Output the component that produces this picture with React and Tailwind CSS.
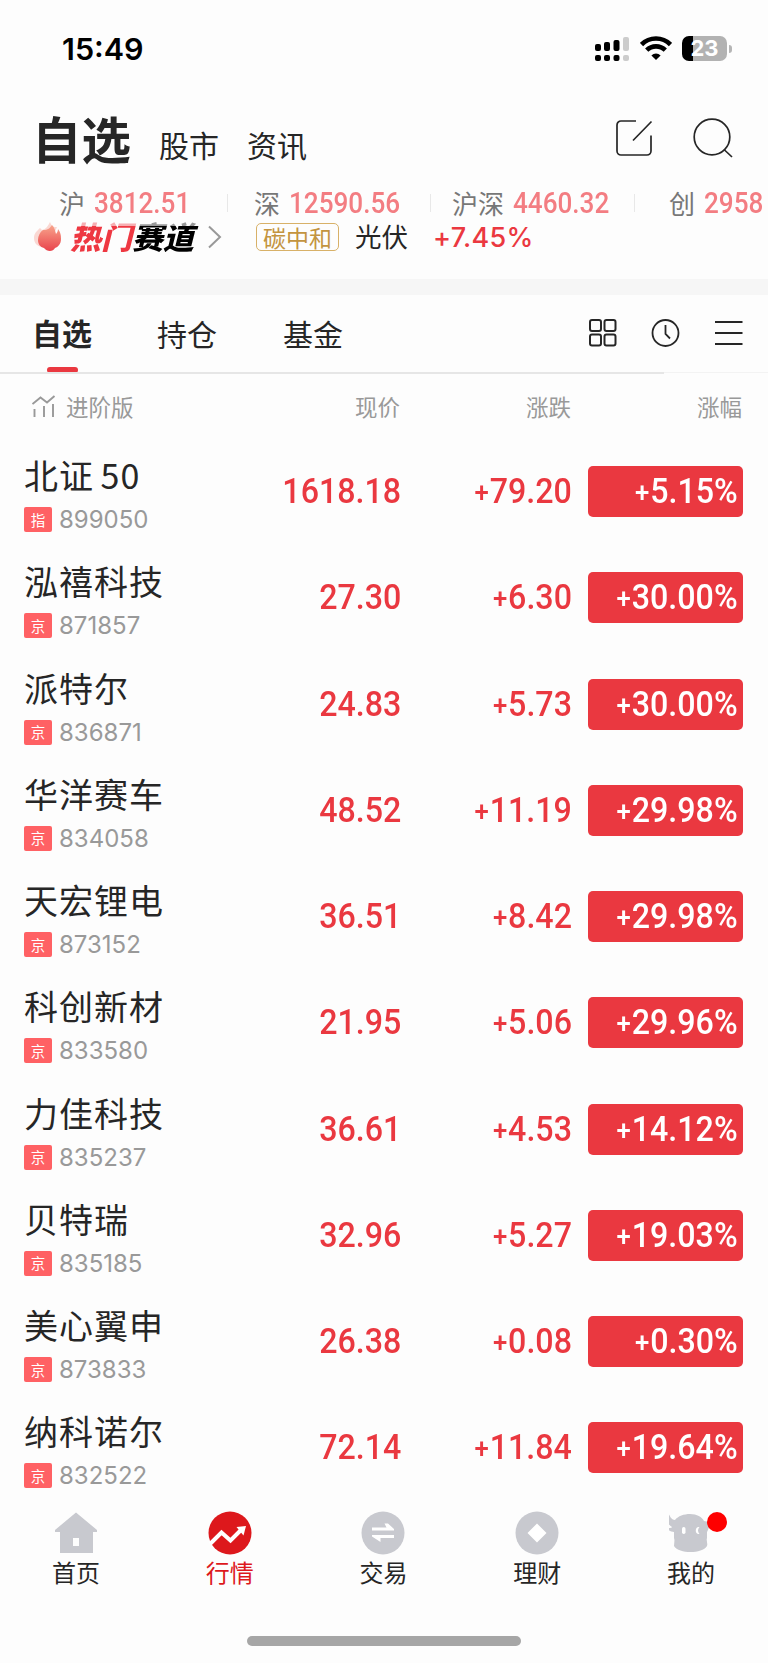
const rows = [
  { name: '北证 50', tag: '指', code: '899050', price: '1618.18', change: '79.20', percent: '5.15' },
  { name: '泓禧科技', tag: '京', code: '871857', price: '27.30', change: '6.30', percent: '30.00' },
  { name: '派特尔', tag: '京', code: '836871', price: '24.83', change: '5.73', percent: '30.00' },
  { name: '华洋赛车', tag: '京', code: '834058', price: '48.52', change: '11.19', percent: '29.98' },
  { name: '天宏锂电', tag: '京', code: '873152', price: '36.51', change: '8.42', percent: '29.98' },
  { name: '科创新材', tag: '京', code: '833580', price: '21.95', change: '5.06', percent: '29.96' },
  { name: '力佳科技', tag: '京', code: '835237', price: '36.61', change: '4.53', percent: '14.12' },
  { name: '贝特瑞', tag: '京', code: '835185', price: '32.96', change: '5.27', percent: '19.03' },
  { name: '美心翼申', tag: '京', code: '873833', price: '26.38', change: '0.08', percent: '0.30' },
  { name: '纳科诺尔', tag: '京', code: '832522', price: '72.14', change: '11.84', percent: '19.64' },
];

function StatusBar() {
  return (
    <div className="flex h-[98px] shrink-0 justify-between pl-[62px] pr-[36px]">
      <span className="mt-[31px] font-['Inter'] text-[30.500px] leading-9 font-semibold text-black">15:49</span>
      <div className="mt-[36px] flex h-[26px] items-start">
        <svg width="35" height="26" viewBox="0 0 35 26">
          <rect x="0" y="8" width="6" height="7" rx="2" />
          <rect x="9" y="6" width="6" height="9" rx="2" />
          <rect x="18.500" y="4" width="6" height="11" rx="2" />
          <rect x="28" y="1" width="6" height="14" rx="2" fill="#ccc" />
          <rect x="0" y="19" width="6" height="6" rx="2" />
          <rect x="9" y="19" width="6" height="6" rx="2" />
          <rect x="18.500" y="19" width="6" height="6" rx="2" />
          <rect x="28" y="19" width="6" height="6" rx="2" fill="#ccc" />
        </svg>
        <svg className="ml-[10px]" width="32" height="26" viewBox="0 0 32 26" fill="none" stroke="#000" strokeWidth="4.600">
          <path d="M1.500 8.500a20.500 20.500 0 0 1 29 0" />
          <path d="M6.700 14.200a13.200 13.200 0 0 1 18.600 0" />
          <path d="M16 24l-4.600-4.600a6.600 6.600 0 0 1 9.200 0z" fill="#000" stroke="none" />
        </svg>
        <div className="ml-[10px] flex h-[25px] w-[45px] items-center justify-center rounded-[7px] bg-[linear-gradient(90deg,#000_11px,#b2b2b2_11px)] font-['Inter'] text-[22px] font-bold text-white">
          23
        </div>
        <div className="mt-[9px] ml-[2px] h-[8px] w-[3px] rounded-r-full bg-[#b5b5b5]" />
      </div>
    </div>
  );
}

function Header() {
  return (
    <div className="flex h-[86px] shrink-0 items-start pr-[35px] pl-[32px] text-[#262626]">
      <h1 className="mt-[5px] text-[49.500px] leading-[70px] font-bold">自选</h1>
      <span className="mt-[25px] ml-[28px] text-[30px] leading-[42px]">股市</span>
      <span className="mt-[25px] ml-[28px] text-[30px] leading-[42px]">资讯</span>
      <svg className="mt-[20px] ml-auto" width="40" height="40" viewBox="0 0 40 40" fill="none" stroke="#262626" strokeWidth="1.700">
        <path d="M22 3H7a4 4 0 0 0-4 4v26a4 4 0 0 0 4 4h26a4 4 0 0 0 4-4V17.500M37.500 3.500L19 22.500" />
      </svg>
      <svg className="mt-[20px] ml-[39px]" width="40" height="42" viewBox="0 0 40 42" fill="none" stroke="#262626" strokeWidth="1.700">
        <circle cx="19" cy="19" r="17.800" />
        <path d="M31 31.500l8 7.500" />
      </svg>
    </div>
  );
}

function Ticker({ label, value }) {
  return (
    <span className="flex shrink-0 items-center leading-[28px]">
      <span className="text-[26px] text-[#777]">{label}</span>
      <span className="ml-[9px] inline-block origin-left scale-x-90 font-['Roboto'] text-[29px] font-medium text-[#f37d82]">{value}</span>
    </span>
  );
}

function Separator() {
  return <div className="h-[18px] w-px shrink-0 bg-[#e8e8e8]" />;
}

function Market() {
  return (
    <div className="h-[95px] shrink-0">
      <div className="flex h-[38px] items-center pl-[59px] whitespace-nowrap">
        <div className="w-[168px] shrink-0"><Ticker label="沪" value="3812.51" /></div>
        <Separator />
        <div className="ml-[26px] w-[176px] shrink-0"><Ticker label="深" value="12590.56" /></div>
        <Separator />
        <div className="ml-[21px] w-[182px] shrink-0"><Ticker label="沪深" value="4460.32" /></div>
        <Separator />
        <div className="ml-[34px]"><Ticker label="创" value="2958" /></div>
      </div>
      <div className="-mt-[2px] flex h-[32px] items-center pl-[34px]">
        <Flame />
        <span className="ml-[8px] [mask-image:linear-gradient(#0006_6px,#000_6px)] pr-[6px] text-[31px] leading-[32px] font-black text-black italic">
          <span className="text-[#ee3842]">热门</span>赛道
        </span>
        <svg className="mt-[2px] ml-[8px]" width="14" height="24" viewBox="0 0 14 24" fill="none" stroke="#999" strokeWidth="2">
          <path d="M1 1.500L12 12 1 22.500" />
        </svg>
        <span className="mt-[2px] ml-[34px] flex h-[28px] w-[83px] items-center justify-center rounded-[5px] border border-[#d8b168] text-[23px] leading-[24px] text-[#c39440]">碳中和</span>
        <span className="ml-[16px] text-[26.500px] leading-[32px] text-[#262626]">光伏</span>
        <span className="mt-[3px] ml-[25px] font-['Inter'] text-[27px] leading-[30px] font-medium tracking-[0.300px] text-[#eb3840]">+7.45%</span>
      </div>
    </div>
  );
}

function Flame() {
  return (
    <svg className="mt-[2px]" width="28" height="30" viewBox="0 0 28 30">
      <defs>
        <linearGradient id="flame" x1="0" y1="0" x2="0" y2="1">
          <stop offset="0" stopColor="#f8a58c" />
          <stop offset="1" stopColor="#e9434c" />
        </linearGradient>
      </defs>
      <path d="M8 25C2 24 0 20 0 16c0-5 3-7 6-10l2 2c4-1 6-4 8-8 2 5 4 5 7 5l-8 18z" fill="#fad8d3" />
      <path d="M9 8c5 0 7-2 9-5 3 3 3 6 4 9 1-1 2-3 2-5 3 4 3 7 3 10 0 5-3 8-6 9-2 4-8 4-11 0-4-1-6-4-6-8 0-4 2-8 5-10z" fill="url(#flame)" />
    </svg>
  );
}

function Tabs() {
  return (
    <div className="flex h-[77px] shrink-0 items-start pr-[25px] pl-[32px] text-[30px] leading-[42px] text-[#262626]">
      <div className="mt-[16px] w-[125px] font-bold">
        自选
        <div className="mt-[14px] ml-[15px] h-[6px] w-[31px] rounded-full bg-[#ea3840]" />
      </div>
      <span className="mt-[17px] w-[126px]">持仓</span>
      <span className="mt-[17px]">基金</span>
      <div className="mt-[23px] ml-auto flex gap-[34px]">
        <svg width="29" height="30" viewBox="0 0 29 30" fill="none" stroke="#262626" strokeWidth="2">
          <rect x="2" y="2" width="11" height="11" rx="2" />
          <rect x="16.500" y="2" width="11" height="11" rx="2" />
          <rect x="2" y="16.500" width="11" height="11" rx="2" />
          <rect x="16.500" y="16.500" width="11" height="11" rx="2" />
        </svg>
        <svg width="29" height="30" viewBox="0 0 29 30" fill="none" stroke="#262626" strokeWidth="1.800">
          <circle cx="14.500" cy="15" r="13" />
          <path d="M14.500 7v9l4.500 4.500" />
        </svg>
        <svg width="29" height="30" viewBox="0 0 29 30" fill="none" stroke="#262626" strokeWidth="1.800">
          <path d="M1 4h27.500M1 15h27.500M1 26h27.500" />
        </svg>
      </div>
    </div>
  );
}

function ColumnHeader() {
  return (
    <div className="flex h-[78px] shrink-0 items-start pt-[16px] pr-[26px] pl-[32px] text-[22.500px] leading-[32px] text-[#999]">
      <svg className="mt-[5px]" width="24" height="24" viewBox="0 0 24 24" fill="none" stroke="#999" strokeWidth="1.900">
        <path d="M.5 9L8.500 2.500l6.500 5L22.500 1M2.500 14v8M12 11v11M21 9v13" />
      </svg>
      <span className="ml-[10px]">进阶版</span>
      <span className="ml-auto w-[171px] text-right">现价</span>
      <span className="w-[171px] text-right">涨跌</span>
      <span className="w-[171px] text-right">涨幅</span>
    </div>
  );
}

// slightly condensed figures, anchored to the right edge of the column
function Figure({ signed, children }) {
  return (
    <span className="inline-block origin-right scale-x-92 whitespace-nowrap">
      {signed && <span className="mr-[1px] align-[1px] text-[28px]">+</span>}
      {children}
    </span>
  );
}

function StockRow({ row }) {
  return (
    <div className="flex h-[106.260px] shrink-0 items-start pr-[25px] pl-[24px] font-['Roboto'] text-[35px] font-medium text-[#ea3840]">
      <div className="w-[180px] font-['Noto_Sans_CJK_SC'] font-normal">
        <div className="h-[44px] text-[34px] leading-[45px] tracking-[1px] [word-spacing:-2px] whitespace-nowrap text-[#262626]">{row.name}</div>
        <div className="mt-[11px] flex h-[25px] items-center">
          <span className="flex h-[25px] w-[28px] items-center justify-center rounded-[2px] bg-[#ff6164] text-[14.500px] leading-[24px] text-white">{row.tag}</span>
          <span className="ml-[7px] font-['Inter'] text-[24px] leading-[25px] text-[#999]">{row.code}</span>
        </div>
      </div>
      <div className="mt-[14px] w-[197px] text-right leading-[52px]"><Figure>{row.price}</Figure></div>
      <div className="mt-[14px] w-[171px] text-right leading-[52px]"><Figure signed>{row.change}</Figure></div>
      <div className="mt-[14px] ml-[16px] h-[51px] w-[155px] rounded-[5px] bg-[#ea3840] pr-[5px] text-right leading-[52px] text-white">
        <Figure signed>{row.percent}%</Figure>
      </div>
    </div>
  );
}

function NavItem({ label, active, badge, children }) {
  return (
    <div className="relative flex flex-1 flex-col items-center">
      <svg width="44" height="44" viewBox="0 0 44 44" fill="#c8c9cf">{children}</svg>
      {badge && <div className="absolute top-[1px] left-[93px] size-[20px] rounded-full bg-[#fe0000]" />}
      <span className={active ? '-mt-[1px] text-[24px] leading-[36px] text-[#dd181c]' : '-mt-[1px] text-[24px] leading-[36px] text-[#262626]'}>{label}</span>
    </div>
  );
}

function BottomNav() {
  return (
    <div className="-mt-[4px] -ml-[1px] flex h-[125px] shrink-0">
      <NavItem label="首页">
        <path d="M22 1.500L43 19v2h-4v21H6V21H1v-2zM19 27v8h6v-8z" fillRule="evenodd" />
      </NavItem>
      <NavItem label="行情" active>
        <circle cx="22" cy="22" r="21.500" fill="#dd181c" />
        <path d="M2 33l11.500-11.500 9 8L34 18" fill="none" stroke="#fff" strokeWidth="4" />
        <path d="M28.500 16L38 15l-2.500 9.500z" fill="#fff" />
      </NavItem>
      <NavItem label="交易">
        <circle cx="22" cy="22" r="21.500" />
        <path d="M11 19.500v-3h14.500l-2-4h3.500l6 5.500v1.500zM33 24v3H19.500v4L11 25.500V24z" fill="#fff" />
      </NavItem>
      <NavItem label="理财">
        <circle cx="22" cy="22" r="21.500" />
        <path d="M22 12.500l9.500 9.500-9.500 9.500L12.500 22z" fill="#fff" />
      </NavItem>
      <NavItem label="我的" badge>
        <path d="M21 3c7 0 12 3 14 7 3 1 5 0 7-1-1 6-3 10-4 12v6c-1 3 1 5 0 8-5 8-28 8-33 0 0-3 1-5 0-8v-6c-3 0-6-2-7-4 2 0 5 0 5-1-5-3-6-8-4-13 2 0 2 6 7 6 3-4 9-6 15-6z" />
        <rect x="13" y="16" width="3.500" height="7" rx="1.700" fill="#fff" />
        <path d="M30.500 16c-5-1-5 8 0 7-2-2-2-5 0-7z" fill="#fff" />
      </NavItem>
    </div>
  );
}

export default function App() {
  return (
    <div className="flex h-[1663px] w-[768px] flex-col overflow-hidden bg-[#fdfdfd] font-['Noto_Sans_CJK_SC',sans-serif]">
      <StatusBar />
      <Header />
      <Market />
      <div className="h-[16px] shrink-0 bg-[#f6f6f6]" />
      <Tabs />
      <div className="flex h-[2px] shrink-0 items-start">
        <div className="h-[2px] w-[664px] bg-[#e6e6e6]" />
        <div className="h-px flex-1 bg-[#f3f3f3]" />
      </div>
      <ColumnHeader />
      {rows.map((row) => <StockRow key={row.code} row={row} />)}
      <BottomNav />
      <div className="mx-auto h-[10px] w-[274px] shrink-0 rounded-full bg-[#a6a6a6]" />
    </div>
  );
}
